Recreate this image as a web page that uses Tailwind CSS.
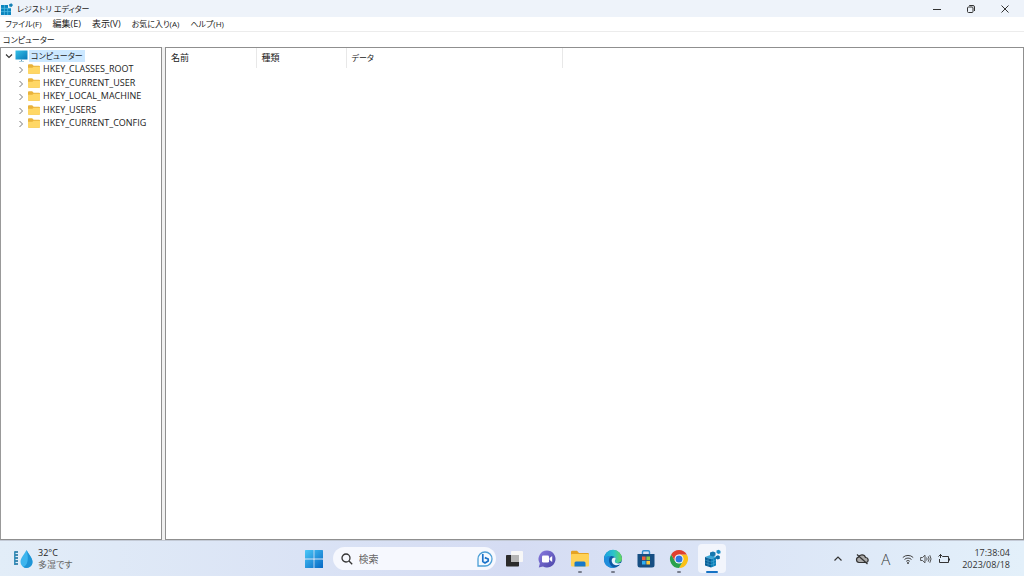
<!DOCTYPE html>
<html lang="ja">
<head>
  <meta charset="UTF-8" />
  <meta name="viewport" content="width=device-width, initial-scale=1.0"/>
  <title>レジストリ エディター</title>
  <script src="https://cdn.jsdelivr.net/npm/@tailwindcss/browser@4"></script>
</head>
<body class="h-screen flex flex-col overflow-hidden bg-white text-[#222] text-[9px] leading-3 font-['Open_Sans','Noto_Sans_CJK_JP',sans-serif] [font-feature-settings:'palt']">

  <svg class="absolute size-0" aria-hidden="true">
    <defs>
      <linearGradient id="screen" x1="0" y1="0" x2="1" y2="1"><stop offset="0" stop-color="#35c1e8"/><stop offset="1" stop-color="#0878b8"/></linearGradient>
      <linearGradient id="win" gradientUnits="userSpaceOnUse" x1="0" y1="0" x2="18" y2="18"><stop offset="0" stop-color="#4cc8f8"/><stop offset="1" stop-color="#0567c4"/></linearGradient>
      <linearGradient id="chat" x1="0" y1="0" x2="1" y2="1"><stop offset="0" stop-color="#8a7be0"/><stop offset="1" stop-color="#4a45a8"/></linearGradient>
      <linearGradient id="edgeTop" x1="0" y1="0" x2="1" y2="0"><stop offset="0" stop-color="#1b9de2"/><stop offset=".55" stop-color="#2cc4c8"/><stop offset="1" stop-color="#66d957"/></linearGradient>
    </defs>
    <symbol id="folder" viewBox="0 0 12 10">
      <path d="M0 1.2Q0 .3 .9.3H4.2L5.6 1.7H11Q12 1.7 12 2.6V8.8Q12 9.7 11 9.7H1Q0 9.7 0 8.8Z" fill="#e9b23a"/>
      <path d="M0 3.8H4.4L5.6 2.7H12V8.8Q12 9.7 11 9.7H1Q0 9.7 0 8.8Z" fill="#ffd765"/>
    </symbol>
    <symbol id="chevron" viewBox="0 0 6 8">
      <path d="M1.5 1L4.5 4L1.5 7" fill="none" stroke="#777" stroke-width="1"/>
    </symbol>
    <symbol id="regedit" viewBox="0 0 20 20">
      <path d="M3 8L9 5.8L14 8L9 10Z" fill="#3aa7d8"/>
      <path d="M3 8L9 10V18.5L3 16.5Z" fill="#075e96"/>
      <path d="M9 10L14 8V16.5L9 18.5Z" fill="#0c7fb8"/>
      <path d="M3 11L9 13L14 11M3 13.8L9 15.8L14 13.8M6 9V17.5M11.6 9V17.5" fill="none" stroke="#5fb9e0" stroke-width=".4"/>
      <path d="M8 3.5L11 2.4L13.5 3.6V6.5L10.8 7.6L8 6.5Z" fill="#1577ae"/>
      <path d="M14.5 1.6L16.8.8L18.5 2V4.2L16.2 5L14.5 3.8Z" fill="#1a8dc5"/>
      <path d="M13.8 7.2L16 6.2L17.8 7.3V9.8L15.6 10.6L13.8 9.5Z" fill="#0b6ca5"/>
    </symbol>
  </svg>

  <!-- title bar -->
  <header class="h-[17px] shrink-0 flex items-center justify-between bg-[#eef3fa]">
    <div class="flex items-center gap-1 pl-px">
      <svg class="size-3" viewBox="0 0 12 12">
        <path d="M0 2H7V5H10V12H0Z" fill="#0b83bd"/>
        <path d="M0 5.3H10M0 8.6H10M3.4 2V12M6.7 5V12" stroke="#58c1e8" stroke-width=".7"/>
        <path d="M8 1.5L10.3.2L12 2L10.5 4L8.3 3.4Z" fill="#1580b5"/>
      </svg>
      <h1 class="text-[8px]">レジストリ エディター</h1>
    </div>
    <div class="flex items-center gap-6 pr-3.5">
      <button class="size-2.5" aria-label="最小化"><svg viewBox="0 0 10 10"><path d="M1 5.5H9" stroke="#333" stroke-width="1"/></svg></button>
      <button class="size-2.5" aria-label="元に戻す"><svg viewBox="0 0 10 10" fill="none" stroke="#333" stroke-width="1"><rect x="1.5" y="3" width="5.5" height="5.5" rx="1"/><path d="M3.2 1.5H7Q8.5 1.5 8.5 3V7"/></svg></button>
      <button class="size-2.5" aria-label="閉じる"><svg viewBox="0 0 10 10"><path d="M1.5 1.5L8.5 8.5M8.5 1.5L1.5 8.5" stroke="#333" stroke-width="1"/></svg></button>
    </div>
  </header>

  <nav class="h-[15px] shrink-0 flex items-center gap-[11px] pl-[5px] border-b border-[#ececec]">
    <button class="text-[8px]">ファイル(F)</button>
    <button>編集(E)</button>
    <button>表示(V)</button>
    <button class="text-[8px]">お気に入り(A)</button>
    <button class="text-[8px]">ヘルプ(H)</button>
  </nav>

  <input type="text" aria-label="アドレス" value="コンピューター" class="h-[15px] w-full shrink-0 pl-[3px] text-[8px] outline-none"/>

  <main class="flex-1 min-h-0 flex bg-[#f0f0f0]">
    <aside class="w-[162px] shrink-0 bg-white border border-l-[#999] border-[#8f8f8f]">
      <ul class="grid grid-rows-6 h-[82px] pt-px pl-1">
        <li class="flex items-center">
          <svg class="w-2 h-2 mr-0.5" viewBox="0 0 8 8"><path d="M1 2.5L4 5.5L7 2.5" fill="none" stroke="#333" stroke-width="1.1"/></svg>
          <svg class="w-[13px] h-3" viewBox="0 0 13 12"><rect x=".5" y=".5" width="12" height="9" fill="url(#screen)"/><path d="M6 9.5H7V11H9V11.6H4V11H6Z" fill="#5d9dbb"/></svg>
          <span class="ml-px px-0.5 text-[8px] bg-[#cce8ff]">コンピューター</span>
        </li>
        <li class="flex items-center pl-[13px]"><svg class="w-1.5 h-2 mr-1 mt-0.5"><use href="#chevron"/></svg><svg class="w-3 h-2.5 mr-[3px]"><use href="#folder"/></svg>HKEY_CLASSES_ROOT</li>
        <li class="flex items-center pl-[13px]"><svg class="w-1.5 h-2 mr-1 mt-0.5"><use href="#chevron"/></svg><svg class="w-3 h-2.5 mr-[3px]"><use href="#folder"/></svg>HKEY_CURRENT_USER</li>
        <li class="flex items-center pl-[13px]"><svg class="w-1.5 h-2 mr-1 mt-0.5"><use href="#chevron"/></svg><svg class="w-3 h-2.5 mr-[3px]"><use href="#folder"/></svg>HKEY_LOCAL_MACHINE</li>
        <li class="flex items-center pl-[13px]"><svg class="w-1.5 h-2 mr-1 mt-0.5"><use href="#chevron"/></svg><svg class="w-3 h-2.5 mr-[3px]"><use href="#folder"/></svg>HKEY_USERS</li>
        <li class="flex items-center pl-[13px]"><svg class="w-1.5 h-2 mr-1 mt-0.5"><use href="#chevron"/></svg><svg class="w-3 h-2.5 mr-[3px]"><use href="#folder"/></svg>HKEY_CURRENT_CONFIG</li>
      </ul>
    </aside>

    <section class="flex-1 ml-[3px] bg-white border border-[#8f8f8f]">
      <table class="table-fixed w-full text-left">
        <thead>
          <tr class="h-5">
            <th class="w-[90px] pl-[5px] font-normal border-r border-[#e8e8e8]">名前</th>
            <th class="w-[90px] pl-[5px] font-normal border-r border-[#e8e8e8]">種類</th>
            <th class="w-[216px] pl-[5px] text-[8px] font-normal border-r border-[#e8e8e8]">データ</th>
            <td></td>
          </tr>
        </thead>
      </table>
    </section>
  </main>

  <!-- taskbar -->
  <footer class="h-9 shrink-0 grid grid-cols-[1fr_auto_1fr] items-center border-t border-[#c3cad6] bg-linear-to-r from-[#e2edf8] via-[#d5dcf3] to-[#e3f0fa]">
    <button class="flex items-center gap-1 pl-3.5 text-left">
      <svg class="size-5" viewBox="0 0 20 20">
        <path d="M1 3H4M1 6H4M1 9H4M1 12H4M1 15H4" stroke="#126c9c" stroke-width="1.6"/>
        <path d="M.8 2.2V16" stroke="#2585b4" stroke-width="1.4"/>
        <path d="M12.5 1C14 4.5 18.5 8.5 18.5 13A6 6 0 0 1 6.5 13C6.5 8.5 11 4.5 12.5 1Z" fill="#3db5ee"/>
        <path d="M12.5 1C14 4.5 18.5 8.5 18.5 13A6 6 0 0 1 9 17.8C14 17 15 9 12.5 1Z" fill="#1e94d6"/>
      </svg>
      <span><span class="block">32°C</span><span class="block text-[#666]">多湿です</span></span>
    </button>

    <div class="flex items-center pl-1.5">
      <button aria-label="スタート" class="mr-2.5">
        <svg class="size-[18px]" viewBox="0 0 18 18" fill="url(#win)"><rect width="8.6" height="8.6" rx=".6"/><rect x="9.4" width="8.6" height="8.6" rx=".6"/><rect y="9.4" width="8.6" height="8.6" rx=".6"/><rect x="9.4" y="9.4" width="8.6" height="8.6" rx=".6"/></svg>
      </button>
      <label class="w-[163px] h-[23px] mr-1 flex items-center rounded-full bg-[#f6f8fe] pl-2 pr-0.5">
        <svg class="size-3 mr-1.5" viewBox="0 0 12 12" fill="none" stroke="#333" stroke-width="1.3"><circle cx="5" cy="5" r="4"/><path d="M8 8L11.2 11.2"/></svg>
        <input type="search" placeholder="検索" aria-label="検索" class="flex-1 min-w-0 text-[10px] leading-4 outline-none placeholder:text-[#666]"/>
        <svg class="size-[18px]" viewBox="0 0 18 18">
          <path d="M2 16V9A7 7 0 1 1 9 16Z" fill="#f4faff" stroke="#4c9fd6" stroke-width="1.3"/>
          <path d="M6.8 4V11.5L9 13L12.2 11V9L8.8 7.6" fill="none" stroke="#1b72c9" stroke-width="1.7" stroke-linejoin="round"/>
        </svg>
      </label>
      <div class="flex gap-[5px]">
        <button aria-label="タスク ビュー" class="relative w-7 h-[29px] flex items-center justify-center">
          <svg class="size-5" viewBox="0 0 20 20"><rect x="7" y="2" width="12" height="11" rx=".8" fill="#f7f7f7"/><rect x="2" y="6" width="13" height="11.5" rx=".8" fill="#2b2b2b"/><path d="M7 6H15V13H7Z" fill="#b5b5b5"/></svg>
        </button>
        <button aria-label="チャット" class="relative w-7 h-[29px] flex items-center justify-center">
          <svg class="size-5" viewBox="0 0 20 20"><path d="M10 1.5A8.5 8.5 0 1 1 6 17.5L1.8 18.5L2.8 14.5A8.5 8.5 0 0 1 10 1.5Z" fill="url(#chat)"/><rect x="5" y="6.5" width="7" height="7" rx="1.3" fill="#fff"/><path d="M12.6 9L15.2 7V13L12.6 11Z" fill="#fff"/></svg>
        </button>
        <button aria-label="エクスプローラー" class="relative w-7 h-[29px] flex items-center justify-center">
          <svg class="size-5" viewBox="0 0 20 20"><path d="M1 3Q1 1.8 2.2 1.8H7L9 4H17.8Q19 4 19 5.2V9H1Z" fill="#e5a323"/><rect x="1" y="5" width="18" height="12.5" rx="1" fill="#ffd257"/><path d="M4.5 17.5V14Q4.5 12.5 6 12.5H14Q15.5 12.5 15.5 14V17.5Z" fill="#1878c8"/></svg>
          <span class="absolute bottom-0 left-3 w-1 h-0.5 rounded-full bg-[#777d8c]"></span>
        </button>
        <button aria-label="Microsoft Edge" class="relative w-7 h-[29px] flex items-center justify-center">
          <svg class="size-5" viewBox="0 0 20 20">
            <circle cx="10" cy="10" r="9" fill="#0c59a4"/>
            <path d="M1 10A9 9 0 0 1 19 9.5C19 12.5 16.5 14 14 14C12 14 11 13 12 12C13.5 10 12 7 8.5 7C5 7 2 8.5 1 12Z" fill="url(#edgeTop)"/>
            <path d="M1 11C1.5 8 5 6.5 8.5 7C6 8 5.5 11 6.5 14C7.5 17 10 18.5 12.5 18.6C6 20 1 16 1 11Z" fill="#1f8ddc"/>
            <path d="M12.5 9C13.3 10.5 11.3 11.5 12 13C13 14.8 16 14.8 18.5 13.7C17 16 14 16.5 12 16C8.5 15 8 11 9.5 9.3C10.5 8.3 12 8 12.5 9Z" fill="#e6f3fb"/>
          </svg>
          <span class="absolute bottom-0 left-3 w-1 h-0.5 rounded-full bg-[#777d8c]"></span>
        </button>
        <button aria-label="Microsoft Store" class="relative w-7 h-[29px] flex items-center justify-center">
          <svg class="size-5" viewBox="0 0 20 20"><path d="M6.5 6V3Q6.5 1.8 7.7 1.8H12.3Q13.5 1.8 13.5 3V6" fill="none" stroke="#2f8fd0" stroke-width="1.4"/><path d="M1.5 5H18.5V16Q18.5 18.5 16 18.5H4Q1.5 18.5 1.5 16Z" fill="#174f83"/><rect x="6" y="7.5" width="3.6" height="3.6" fill="#f2603c"/><rect x="10.4" y="7.5" width="3.6" height="3.6" fill="#8fca3f"/><rect x="6" y="11.9" width="3.6" height="3.6" fill="#30aef0"/><rect x="10.4" y="11.9" width="3.6" height="3.6" fill="#ffc83a"/></svg>
        </button>
        <button aria-label="Google Chrome" class="relative w-7 h-[29px] flex items-center justify-center">
          <svg class="size-5" viewBox="0 0 20 20">
            <path d="M10 5.5H17.8A9 9 0 0 1 10 19L13.9 12.2Z" fill="#fbc116"/>
            <path d="M13.9 12.2L10 19A9 9 0 0 1 2.2 5.5L6.1 12.2Z" fill="#2ba24c"/>
            <path d="M2.2 5.5A9 9 0 0 1 17.8 5.5H10L6.1 12.2Z" fill="#e0402f"/>
            <circle cx="10" cy="10" r="4.5" fill="#fff"/><circle cx="10" cy="10" r="3.5" fill="#2f76e0"/>
          </svg>
          <span class="absolute bottom-0 left-3 w-1 h-0.5 rounded-full bg-[#777d8c]"></span>
        </button>
        <button aria-label="レジストリ エディター" class="relative w-7 h-[29px] flex items-center justify-center rounded-sm bg-[#f2f5fc]">
          <svg class="size-5"><use href="#regedit"/></svg>
          <span class="absolute bottom-0 left-2 w-3 h-0.5 rounded-full bg-[#1572c4]"></span>
        </button>
      </div>
    </div>

    <div class="flex items-center justify-end pr-3.5 text-right">
      <button aria-label="隠れているインジケーター" class="mr-3"><svg class="size-2.5" viewBox="0 0 10 10"><path d="M1.5 6.5L5 3L8.5 6.5" fill="none" stroke="#333" stroke-width="1.2"/></svg></button>
      <button aria-label="OneDrive" class="mr-3"><svg class="w-3.5 h-3" viewBox="0 0 14 12" fill="none" stroke="#333" stroke-width="1.2"><path d="M4 9.5A2.7 2.7 0 0 1 3.5 4.2A3.7 3.7 0 0 1 10.5 4.5A2.5 2.5 0 0 1 10.8 9.5Z" fill="#aaa"/><path d="M2 1.5L12.5 11"/></svg></button>
      <button aria-label="入力モード" class="mr-3 text-[15px] leading-4 font-light text-[#333]">A</button>
      <button aria-label="クイック設定" class="mr-3 flex items-center gap-1.5">
        <svg class="w-3 h-3" viewBox="0 0 12 12" fill="none" stroke="#444" stroke-width="1"><path d="M.8 4.5A7.5 7.5 0 0 1 11.2 4.5M2.5 6.5A5 5 0 0 1 9.5 6.5M4.2 8.3A2.6 2.6 0 0 1 7.8 8.3"/><circle cx="6" cy="10" r=".6" fill="#444"/></svg>
        <svg class="w-3 h-3" viewBox="0 0 12 12" fill="none" stroke="#444" stroke-width=".9"><path d="M.6 4.5H2.5L5 2.2V9.8L2.5 7.5H.6ZM6.6 4.5Q7.6 6 6.6 7.5M8.2 3.3Q10 6 8.2 8.7M9.8 2.2Q12.3 6 9.8 9.8"/></svg>
        <svg class="w-3 h-3" viewBox="0 0 12 12" fill="none" stroke="#333" stroke-width="1"><path d="M4.5 3.5H10.5V9.5H1.5V6M11.5 5.5V7.5M2.5 5V1M.5 3.5L2.5 1.5L4.5 3.5"/></svg>
      </button>
      <button class="text-right text-[#333]"><time datetime="2023-08-18T17:38:04"><span class="block">17:38:04</span><span class="block">2023/08/18</span></time></button>
    </div>
  </footer>

</body>
</html>
